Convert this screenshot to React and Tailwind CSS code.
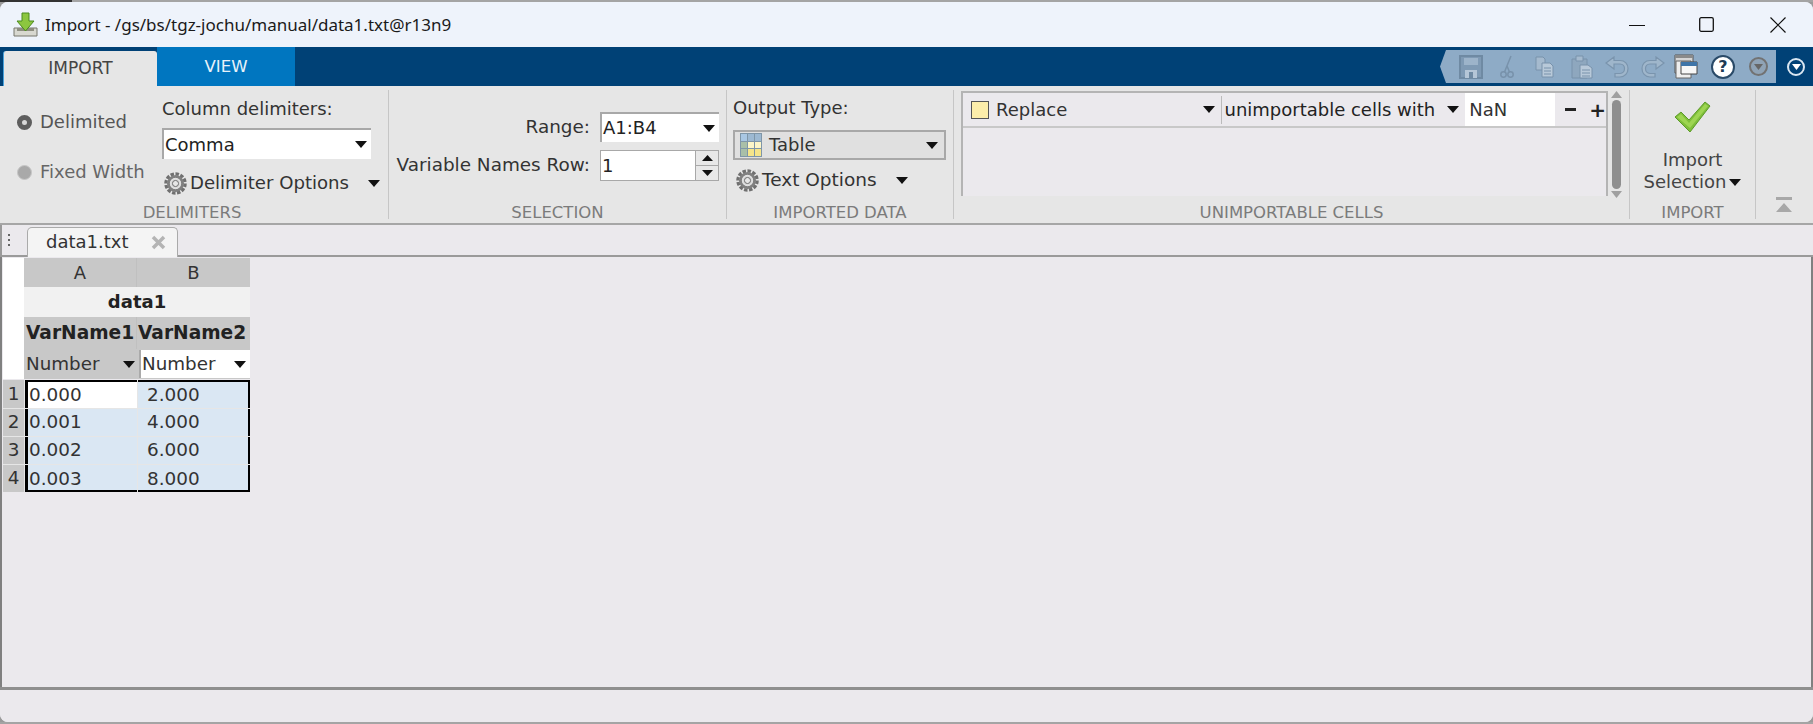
const dejavu = "font-['DejaVu_Sans',sans-serif]";

const Caret = ({ className = "" }) => (
  <svg width="12" height="7" viewBox="0 0 12 7" className={`shrink-0 ${className}`}>
    <path d="M0 0H12L6 7Z" fill="#111" />
  </svg>
);

const Gear = ({ size = 23 }) => (
  <svg width={size} height={size} viewBox="0 0 24 24" className="shrink-0">
    <circle cx="12" cy="12" r="10" fill="none" stroke="#707070" strokeWidth="3.5" strokeDasharray="3.6 1.6" />
    <circle cx="12" cy="12" r="7.4" fill="none" stroke="#808080" strokeWidth="3" />
    <circle cx="12" cy="12" r="4.6" fill="none" stroke="#dcdcdc" strokeWidth="1.6" />
    <circle cx="12" cy="12" r="3.2" fill="none" stroke="#666" strokeWidth="1" />
  </svg>
);

const Radio = ({ checked, label }) => (
  <div className="flex items-center h-6 pl-[17px] gap-2">
    <span className={`w-[15px] h-[15px] rounded-full shrink-0 ${checked ? "bg-[#d8d8d8] border-[5px] border-[#5e5e5e]" : "bg-[#a9a9a9] border border-[#c6c6c6]"}`} />
    <span className={checked ? "text-[#555]" : "text-[#666]"}>{label}</span>
  </div>
);

const Section = ({ label, width, labelClass = "", children }) => (
  <div className={`${width} h-full flex flex-col shrink-0`}>
    <div className="flex-1 min-h-0">{children}</div>
    <div className={`h-[19px] flex items-center justify-center text-[16.5px] text-[#7b7b7b] shrink-0 leading-none ${labelClass}`}>{label}</div>
  </div>
);

const Divider = () => <div className="w-px my-1 bg-[#c6c6c6] shrink-0" />;

const ImportIcon = () => (
  <svg width="25" height="25" viewBox="0 0 25 25" className="shrink-0">
    <path d="M1 16H24V24H1Z" fill="#d8d8d0" stroke="#77776c" />
    <path d="M4 16H21V19H4Z" fill="#8d8d80" />
    <path d="M9 1H16V9H21L12.5 19L4 9H9Z" fill="#8cc63f" stroke="#4a8a1e" />
  </svg>
);

const Save = () => (
  <svg width="24" height="24" viewBox="0 0 24 24" className="shrink-0">
    <path d="M1 1H23V23H1Z" fill="#7f9ab4" stroke="#6f8aa3" strokeWidth="2" />
    <path d="M5 3H19V10H5Z" fill="#9db4ca" />
    <path d="M6 15H18V23H6Z" fill="#b5c6d7" />
    <path d="M10 17H14V23H10Z" fill="#6f8aa3" />
  </svg>
);

const Scissors = () => (
  <svg width="14" height="24" viewBox="0 0 14 24" className="shrink-0" fill="none" stroke="#7892ab" strokeWidth="1.5">
    <circle cx="3.5" cy="19.5" r="2.7" />
    <circle cx="10.5" cy="19.5" r="2.7" />
    <path d="M4.5 17L11 1M9.5 17L7 11" />
  </svg>
);

const Copy = () => (
  <svg width="19" height="22" viewBox="0 0 19 22" className="shrink-0">
    <path d="M1 1H8L10 3V14H1Z" fill="#a5bace" stroke="#7892ab" />
    <path d="M7 7H15L18 10V21H7Z" fill="#b8c9d9" stroke="#7892ab" />
    <path d="M9 12H16M9 15H16M9 18H16" stroke="#7892ab" />
  </svg>
);

const Paste = () => (
  <svg width="22" height="24" viewBox="0 0 22 24" className="shrink-0">
    <path d="M1 4H16V23H1Z" fill="#8ea7be" stroke="#7892ab" />
    <path d="M5 1H12V6H5Z" fill="#a5bace" stroke="#7892ab" />
    <path d="M9 10H17L21 13V23H9Z" fill="#b8c9d9" stroke="#7892ab" />
    <path d="M11 15H19M11 18H19M11 21H19" stroke="#7892ab" />
  </svg>
);

const Undo = ({ flip }) => (
  <svg width="24" height="22" viewBox="0 0 24 22" className={`shrink-0 ${flip ? "-scale-x-100" : ""}`}>
    <path d="M1 7L9 1V4.5H15C20 4.5 23 8 23 12.5C23 17 20 21 15 21H10V17.5H15C18 17.5 19.5 15 19.5 12.5C19.5 10 18 8 15 8H9V13Z" fill="#9fb6cb" stroke="#7a94ad" strokeWidth="1.2" />
  </svg>
);

const Windows = () => (
  <svg width="24" height="26" viewBox="0 0 24 26" className="shrink-0">
    <path d="M1 1H19V19H1Z" fill="#d5d5d5" stroke="#555" />
    <path d="M1 1H19V4H1Z" fill="#8a8a8a" />
    <path d="M2 7H17V24H2Z" fill="#eee" stroke="#666" />
    <path d="M7 8H23V20H7Z" fill="#f7f7f7" stroke="#444" />
    <path d="M7 8H23V12H7Z" fill="#3f75a8" />
  </svg>
);

const CheckIcon = () => (
  <svg width="37" height="32" viewBox="0 0 37 32" className="shrink-0">
    <path d="M1 16L7 11L15 19L31 1L36 5L16 31Z" fill="#7fbf3a" stroke="#5c9a28" strokeLinejoin="round" />
    <path d="M3 16L7 13L15 22L31 3L34 5L16 27Z" fill="#9ed552" />
  </svg>
);

const TableIcon = () => (
  <svg width="22" height="24" viewBox="0 0 22 24" className="shrink-0">
    <path d="M0 0H22V24H0Z" fill="#7f96a8" />
    <path d="M1 1H7V8H1Z" fill="#a9c7e3" />
    <path d="M8 1H14V8H8ZM15 1H21V8H15Z" fill="#9db9d2" />
    <path d="M1 9H7V15H1ZM1 16H7V23H1Z" fill="#a9bfa8" />
    <path d="M8 9H14V15H8ZM15 9H21V15H15Z" fill="#fdf6c8" />
    <path d="M8 16H14V23H8ZM15 16H21V23H15Z" fill="#f6e58a" />
  </svg>
);

const Field = ({ children }) => (
  <div className="h-full bg-white border-t-2 border-l-2 border-[#a8a8a8] flex items-center justify-between pl-[1px] pr-[4px]">
    <span>{children}</span>
    <Caret />
  </div>
);

const dataRows = [
  { a: "0.000", b: "2.000", h: "h-[28px]", edge: "border-t-2", pad: "" },
  { a: "0.001", b: "4.000", h: "h-[27px]", edge: "", pad: "" },
  { a: "0.002", b: "6.000", h: "h-[27px]", edge: "", pad: "" },
  { a: "0.003", b: "8.000", h: "h-[27px]", edge: "border-b-2", pad: "pt-[3px]" },
];

export default function App() {
  return (
    <div className={`w-[1813px] h-[724px] flex flex-col overflow-hidden bg-[#9a9a9a] ${dejavu} text-[18px] text-[#222] leading-none`}>
      <div className="h-[2px] shrink-0 flex">
        <div className="w-[72px] bg-[#333]" />
        <div className="flex-1 bg-[#a4a4a4]" />
      </div>
      <div className="flex-1 min-h-0 flex flex-col bg-[#ebe9ed] rounded-[8px] overflow-hidden">
        {/* title bar */}
        <div className="h-[45px] shrink-0 bg-[#eef3fb] flex items-center pl-[13px]">
          <ImportIcon />
          <span className="ml-[7px] text-[17px] text-[#1a1a1a] font-['Noto_Sans',sans-serif]">Import - /gs/bs/tgz-jochu/manual/data1.txt@r13n9</span>
          <div className="ml-auto flex items-center pr-[27px]">
            <svg width="16" height="16" viewBox="0 0 16 16"><path d="M0 8.5H16" stroke="#111" strokeWidth="1.2" /></svg>
            <svg width="15" height="15" viewBox="0 0 15 15" className="ml-[54px]"><rect x="0.7" y="0.7" width="13.6" height="13.6" rx="1.5" fill="none" stroke="#111" strokeWidth="1.3" /></svg>
            <svg width="16" height="16" viewBox="0 0 16 16" className="ml-[56px]"><path d="M0.5 0.5L15.5 15.5M15.5 0.5L0.5 15.5" stroke="#111" strokeWidth="1.2" /></svg>
          </div>
        </div>

        {/* ribbon tabs */}
        <div className="h-[39px] shrink-0 bg-[#004176] flex pl-[3px]">
          <div className="w-[154px] mt-[4px] bg-[#e6e6e6] rounded-t-[3px] border-l border-[#4aa3dc] flex items-center justify-center text-[17px] text-[#444]">IMPORT</div>
          <div className="w-[138px] pt-[2px] bg-[#0076c0] flex items-center justify-center text-[16.5px] text-[#e8f2fa]">VIEW</div>
          <div className="ml-auto flex items-center h-full pr-[8px]">
            <div className="flex items-center h-[33px] w-[336px] bg-[#8eabc6] [clip-path:polygon(6px_0,100%_0,100%_100%,6px_100%,0_50%)] pl-[19px]">
              <Save />
              <span className="ml-[17px]"><Scissors /></span>
              <span className="ml-[21px]"><Copy /></span>
              <span className="ml-[17px]"><Paste /></span>
              <span className="ml-[12px]"><Undo /></span>
              <span className="ml-[12px]"><Undo flip /></span>
              <span className="ml-[9px]"><Windows /></span>
              <span className="ml-[13px] w-[24px] h-[24px] rounded-full bg-white border-2 border-[#2a4a68] flex items-center justify-center text-[16px] font-bold text-[#1d3a55]">?</span>
              <span className="ml-[14px] w-[19px] h-[19px] rounded-full border-2 border-[#727272] bg-[#8fa3b6] flex items-center justify-center">
                <svg width="9" height="6" viewBox="0 0 9 6"><path d="M0 0H9L4.5 6Z" fill="#666" /></svg>
              </span>
            </div>
            <span className="ml-[11px] w-[18px] h-[18px] rounded-full border-2 border-[#d9e6f1] flex items-center justify-center">
              <svg width="9" height="6" viewBox="0 0 9 6"><path d="M0 0H9L4.5 6Z" fill="#fff" /></svg>
            </span>
          </div>
        </div>

        {/* toolstrip */}
        <div className="h-[139px] shrink-0 bg-[#e6e6e6] border-b-2 border-[#a6a6a6] flex">
          <Section label="DELIMITERS" width="w-[388px]" labelClass="pr-[4px]">
            <div className="flex h-full">
              <div className="w-[162px] pt-[24px] flex flex-col gap-[26px] shrink-0">
                <Radio checked label="Delimited" />
                <Radio label="Fixed Width" />
              </div>
              <div className="flex-1 pt-[12px]">
                <div className="h-[22px] flex items-center text-[#333]">Column delimiters:</div>
                <div className="mt-[8px] h-[31px] w-[209px]"><Field>Comma</Field></div>
                <div className="mt-[12px] h-6 flex items-center pl-[2px]">
                  <Gear />
                  <span className="ml-[3px] text-[18.1px] text-[#333]">Delimiter Options</span>
                  <Caret className="ml-[19px]" />
                </div>
              </div>
            </div>
          </Section>
          <Divider />
          <Section label="SELECTION" width="w-[337px]">
            <div className="pt-[26px] grid grid-cols-[201px_119px] gap-x-[10px] gap-y-[8px] grid-rows-[30px_31px]">
              <div className="flex items-center justify-end text-[#333] text-[18.4px]">Range:</div>
              <Field>A1:B4</Field>
              <div className="flex items-center justify-end text-[#333] whitespace-nowrap text-[18.4px]">Variable Names Row:</div>
              <div className="flex bg-white border border-[#a8a8a8]">
                <div className="flex-1 flex items-center pl-[1px]">1</div>
                <div className="w-[23px] flex flex-col border-l border-[#a8a8a8] bg-[#e8e8e8]">
                  <div className="flex-1 flex items-center justify-center border-b border-[#a8a8a8]">
                    <svg width="11" height="6" viewBox="0 0 11 6"><path d="M0 6H11L5.5 0Z" fill="#111" /></svg>
                  </div>
                  <div className="flex-1 flex items-center justify-center">
                    <svg width="11" height="6" viewBox="0 0 11 6"><path d="M0 0H11L5.5 6Z" fill="#111" /></svg>
                  </div>
                </div>
              </div>
            </div>
          </Section>
          <Divider />
          <Section label="IMPORTED DATA" width="w-[226px]">
            <div className="pl-[6px] pt-[11px]">
              <div className="h-[22px] flex items-center text-[#333]">Output Type:</div>
              <div className="mt-[11px] h-[30px] w-[213px] bg-[#e0e0e0] border-2 border-[#a8a8a8] flex items-center pl-[5px] pr-[6px]">
                <TableIcon />
                <span className="ml-[7px] text-[#333]">Table</span>
                <Caret className="ml-auto" />
              </div>
              <div className="mt-[8px] h-6 flex items-center pl-[3px]">
                <Gear />
                <span className="ml-[3px] text-[18.5px] text-[#333]">Text Options</span>
                <Caret className="ml-[19px]" />
              </div>
            </div>
          </Section>
          <Divider />
          <Section label="UNIMPORTABLE CELLS" width="w-[675px]">
            <div className="flex pl-[7px] pt-[5px] h-full">
              <div className="w-[647px] h-[105px] bg-[#ebe9ed] border-t-2 border-l-2 border-r-2 border-[#b4b4b4]">
                <div className="h-[35px] border-b-2 border-[#c8c8c8] flex items-center">
                  <span className="ml-[8px] w-[18px] h-[18px] bg-[#fdeeaa] border border-[#555] shrink-0" />
                  <span className="ml-[7px] text-[#333]">Replace</span>
                  <Caret className="ml-auto" />
                  <span className="ml-[6px] w-px h-[28px] bg-[#bbb]" />
                  <span className="ml-[2px] text-[#222] whitespace-nowrap">unimportable cells with</span>
                  <Caret className="ml-[12px]" />
                  <div className="ml-[6px] w-[90px] h-full bg-white flex items-center pl-[4px] text-[#333]">NaN</div>
                  <span className="ml-[10px] w-[11px] h-[3px] bg-[#222]" />
                  <span className="ml-[13px] font-bold text-[20px]">+</span>
                </div>
              </div>
              <div className="ml-[3px] w-[10px] h-[107px] flex flex-col items-center">
                <svg width="11" height="7" viewBox="0 0 11 7" className="shrink-0"><path d="M0 7H11L5.5 0Z" fill="#a0a0a0" /></svg>
                <div className="flex-1 w-[9px] my-[2px] rounded-full bg-[#8f8f8f]" />
                <svg width="11" height="7" viewBox="0 0 11 7" className="shrink-0"><path d="M0 0H11L5.5 7Z" fill="#a0a0a0" /></svg>
              </div>
            </div>
          </Section>
          <Divider />
          <Section label="IMPORT" width="w-[125px]">
            <div className="flex flex-col items-center pt-[15px] text-[#444]">
              <CheckIcon />
              <span className="mt-[18px]">Import</span>
              <span className="mt-[4px] flex items-center gap-[3px]">Selection<Caret /></span>
            </div>
          </Section>
          <Divider />
          <div className="flex-1 flex items-end justify-center pb-[10px] pr-[1px]">
            <svg width="16" height="16" viewBox="0 0 16 16"><path d="M0 0H16V3H0ZM0 15L8 6L16 15Z" fill="#a8a8a8" /></svg>
          </div>
        </div>

        {/* document tabs */}
        <div className="h-[32px] shrink-0 flex items-end border-b-2 border-l-2 border-[#9a9a9a]">
          <div className="w-[25px] h-full flex flex-col items-center justify-center gap-[3px] pr-[12px]">
            <span className="w-[2px] h-[2px] bg-[#666]" />
            <span className="w-[2px] h-[2px] bg-[#666]" />
            <span className="w-[2px] h-[2px] bg-[#666]" />
          </div>
          <div className="w-[151px] h-[30px] -mb-[2px] bg-[#f4f4f4] border-t border-l border-r border-[#aaa] rounded-t-[5px] flex items-center pl-[18px] pb-[2px]">
            <span className="text-[#333]">data1.txt</span>
            <svg width="15" height="15" viewBox="0 0 15 15" className="ml-[22px] mt-[2px]"><path d="M2 2L13 13M13 2L2 13" stroke="#b4b4b4" strokeWidth="3.5" /></svg>
          </div>
        </div>

        {/* sheet */}
        <div className="flex-1 min-h-0 border-l-2 border-r-2 border-[#808080] pt-[1px] pl-[1px]">
          <div className="w-[247px] grid grid-cols-[21px_113px_113px] grid-rows-[29px_30px_32px_30px] leading-none">
            <div className="bg-white row-span-4" />
            <div className="bg-[#c8c8c8] flex items-center justify-center border-r border-[#c0c0c0] text-[#333]">A</div>
            <div className="bg-[#c8c8c8] flex items-center justify-center text-[#333]">B</div>
            <div className="col-span-2 bg-[#f1f1f1] flex items-center justify-center font-bold text-[#222]">data1</div>
            <div className="bg-[#c8c8c8] flex items-center pl-[2px] font-bold text-[18.6px] text-[#222] border-r border-[#c0c0c0]">VarName1</div>
            <div className="bg-[#c8c8c8] flex items-center pl-[1px] font-bold text-[18.6px] text-[#222]">VarName2</div>
            <div className="bg-[#c8c8c8] flex items-center justify-between pl-[2px] pr-[2px] text-[#333] text-[18.3px]">Number<Caret /></div>
            <div className="bg-[#c8c8c8] pl-[2px] py-[1px]">
              <div className="h-full bg-white border-l-2 border-[#aaa] flex items-center justify-between pr-[4px] pl-[1px] text-[#333] text-[18.3px]">Number<Caret /></div>
            </div>
          </div>
          <div className="w-[247px] mt-[1px] grid grid-cols-[21px_112px_112px] gap-[1px] bg-[#e6e6e6] text-[18.4px] text-[#333]">
            {dataRows.map((row, i) => (
              <div key={row.a} className="contents">
                <div className={`${row.h} bg-[#c8c8c8] flex items-center justify-center`}>{i + 1}</div>
                <div className={`${row.h} ${row.edge} ${row.pad} border-l-[3px] border-black flex items-center pl-[1px] ${i === 0 ? "bg-white" : "bg-[#dae7f3]"}`}>{row.a}</div>
                <div className={`${row.h} ${row.edge} ${row.pad} border-r-2 border-black flex items-center pl-[9px] bg-[#dae7f3]`}>{row.b}</div>
              </div>
            ))}
          </div>
        </div>
        <div className="h-[3px] shrink-0 bg-[#8f8f8f]" />
        <div className="h-[32px] shrink-0 bg-[#ebe9ed]" />
      </div>
      <div className="h-[2px] shrink-0 bg-[#a4a4a4]" />
    </div>
  );
}
